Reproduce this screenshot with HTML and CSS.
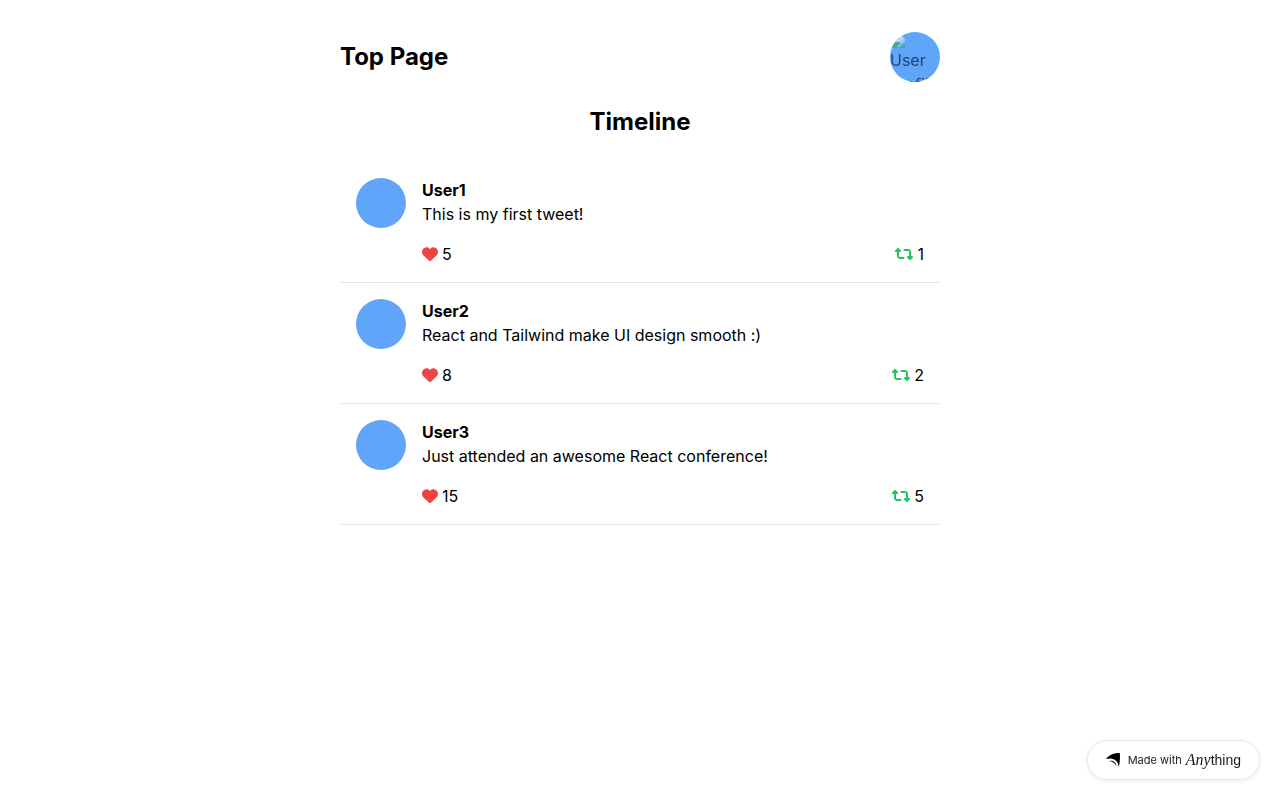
FILE: index.html
```
<!DOCTYPE html>
<html lang="en">
<head>
  <meta charset="UTF-8">
  <meta name="viewport" content="width=device-width, initial-scale=1.0">
  <title>Top Page</title>
  <link rel="stylesheet" href="styles.css">
</head>
<body>
  <svg width="0" height="0" class="sprite" aria-hidden="true">
    <symbol id="heart" viewBox="0 0 512 512">
      <path d="M47.6 300.4L228.3 469.1c7.5 7 17.4 10.9 27.7 10.9s20.2-3.9 27.7-10.9L464.4 300.4c30.4-28.3 47.6-68 47.6-109.5v-5.8c0-69.9-50.5-129.5-119.4-141C347 36.5 300.6 51.4 268 84L256 96 244 84c-32.6-32.6-79-47.5-124.6-39.9C50.5 55.6 0 115.2 0 185.1v5.8c0 41.5 17.2 81.2 47.6 109.5z"/>
    </symbol>
    <symbol id="retweet" viewBox="0 0 576 512">
      <path d="M272 416c17.7 0 32-14.3 32-32s-14.3-32-32-32H160c-17.7 0-32-14.3-32-32V192h32c12.9 0 24.6-7.8 29.6-19.8s2.2-25.7-6.9-34.9l-64-64c-12.5-12.5-32.8-12.5-45.3 0l-64 64c-9.2 9.2-11.9 22.9-6.9 34.9s16.6 19.8 29.6 19.8l32 0 0 128c0 53 43 96 96 96H272zM304 96c-17.7 0-32 14.3-32 32s14.3 32 32 32l112 0c17.7 0 32 14.3 32 32l0 128H416c-12.9 0-24.6 7.8-29.6 19.8s-2.2 25.7 6.9 34.9l64 64c12.5 12.5 32.8 12.5 45.3 0l64-64c9.2-9.2 11.9-22.9 6.9-34.9s-16.6-19.8-29.6-19.8l-32 0V192c0-53-43-96-96-96L304 96z"/>
    </symbol>
  </svg>

  <main class="container">
    <header class="header">
      <h1>Top Page</h1>
      <div class="avatar">
        <div class="profile">
          <svg class="photo" viewBox="0 0 16 16" width="16" height="16" aria-hidden="true">
            <path fill="#d3e5fc" d="M1 2h9l5 5v8H1z"/>
            <path fill="#fff" d="M3 9c0-2 2-2 3-1 1-2 4-1 4 1z"/>
            <path fill="#35a853" d="M1 16v-3c3-3 7-4 10-2l-5 5z"/>
            <path fill="#60a5fa" d="M7 16l9-8v8z"/>
            <path fill="#35a853" d="M10 16l5-4v4z"/>
            <path fill="#fff" d="M10 2v5h5z"/>
            <path fill="none" stroke="#a3b4c8" d="M1 16V2h9l5 5"/>
          </svg>
          <span>User profile</span>
        </div>
      </div>
    </header>

    <h2>Timeline</h2>

    <article class="tweet">
      <div class="avatar"></div>
      <div class="content">
        <h3>User1</h3>
        <p>This is my first tweet!</p>
        <div class="actions">
          <span class="action"><svg class="heart"><use href="#heart"/></svg>5</span>
          <span class="action"><svg class="retweet"><use href="#retweet"/></svg>1</span>
        </div>
      </div>
    </article>

    <article class="tweet">
      <div class="avatar"></div>
      <div class="content">
        <h3>User2</h3>
        <p>React and Tailwind make UI design smooth :)</p>
        <div class="actions">
          <span class="action"><svg class="heart"><use href="#heart"/></svg>8</span>
          <span class="action"><svg class="retweet"><use href="#retweet"/></svg>2</span>
        </div>
      </div>
    </article>

    <article class="tweet">
      <div class="avatar"></div>
      <div class="content">
        <h3>User3</h3>
        <p>Just attended an awesome React conference!</p>
        <div class="actions">
          <span class="action"><svg class="heart"><use href="#heart"/></svg>15</span>
          <span class="action"><svg class="retweet"><use href="#retweet"/></svg>5</span>
        </div>
      </div>
    </article>
  </main>

  <a class="badge" href="#">
    <svg class="mark" viewBox="0 0 14 14" width="14" height="14" aria-hidden="true">
      <path d="M0 6C3 2 8 0 12.500 0c1 0 1.500.5 1.500 1.500 0 4 0 9-1.500 12.500C12.500 8 8 4 0 6z"/>
      <path d="M3 8c4-1 7 1 7.500 5C8.500 10 6.500 8.500 3 8z"/>
    </svg>
    <span class="made">Made with</span>
    <span class="brand"><i>Any</i>thing</span>
  </a>
</body>
</html>
```
FILE: styles.css
```
* {
  box-sizing: border-box;
  margin: 0;
  padding: 0;
}
body {
  font-family: Inter, sans-serif;
  font-size: 16px;
  line-height: 24px;
  color: #000;
  background: #fff;
}
.sprite {
  position: absolute;
}
.container {
  max-width: 600px;
  margin: 0 auto;
  padding: 32px 0;
}
.header {
  display: flex;
  justify-content: space-between;
  align-items: center;
  margin-bottom: 24px;
}
h1, h2 {
  font-size: 24px;
  line-height: 32px;
  font-weight: 700;
}
h2 {
  text-align: center;
  margin-bottom: 24px;
}
h3 {
  font-size: 16px;
  font-weight: 700;
}
.avatar {
  flex: none;
  width: 50px;
  height: 50px;
  border-radius: 50%;
  background: #60a5fa;
  overflow: hidden;
}
.profile {
  opacity: 0.6;
}
.photo {
  display: block;
}
.tweet {
  display: flex;
  gap: 16px;
  padding: 16px;
  border-bottom: 1px solid #e5e7eb;
}
.content {
  flex: 1;
}
.actions {
  display: flex;
  justify-content: space-between;
  margin-top: 16px;
}
.action {
  display: flex;
  align-items: center;
  gap: 4px;
}
.heart {
  width: 16px;
  height: 16px;
  fill: #ef4444;
}
.retweet {
  width: 18px;
  height: 16px;
  fill: #22c55e;
}
.badge {
  position: fixed;
  right: 20px;
  bottom: 20px;
  display: flex;
  align-items: center;
  height: 40px;
  padding: 0 18px;
  border: 1px solid #e8e8ea;
  border-radius: 20px;
  background: #fff;
  box-shadow: 0 1px 4px rgba(0, 0, 0, 0.08);
  color: #18191b;
  text-decoration: none;
  white-space: nowrap;
}
.mark {
  flex: none;
  margin-right: 8px;
}
.made {
  font-size: 11px;
  margin-right: 4px;
}
.brand {
  font-family: "Liberation Sans", Arial, sans-serif;
  font-size: 14px;
}
.brand i {
  font-family: "Liberation Serif", serif;
  font-size: 16px;
}
```
